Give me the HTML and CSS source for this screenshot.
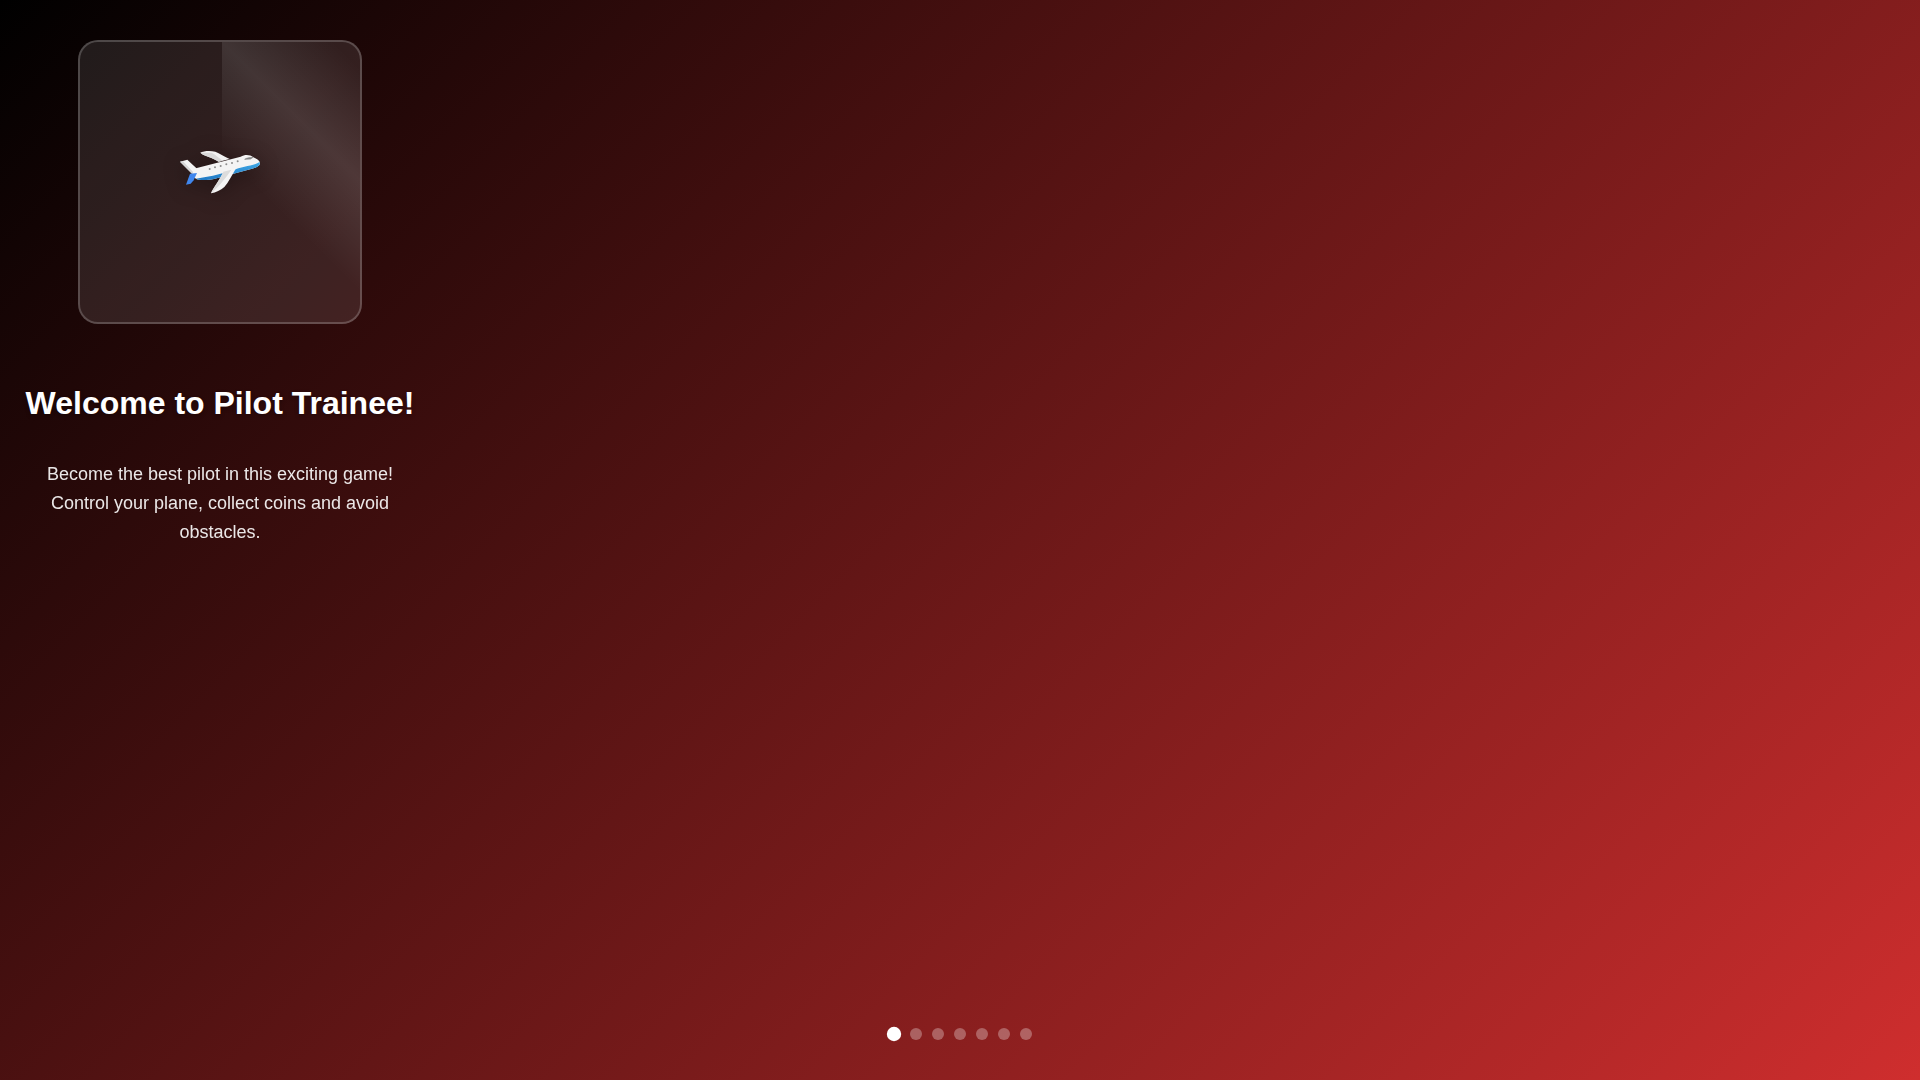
FILE: index.html
```
<!DOCTYPE html>
<html lang="en">
<head>
    <meta charset="UTF-8">
    <meta name="viewport" content="width=device-width, initial-scale=1.0">
    <title>Pilot Trainee</title>
    <link rel="stylesheet" href="styles.css">
</head>
<body>
    <main class="slide">
        <div class="slide-image">
            <svg class="slide-icon" viewBox="60 36 240 240" role="img" aria-label="Plane">
                <defs>
                    <linearGradient id="belly" x1="0" y1="0" x2="0" y2="1">
                        <stop offset="0" stop-color="#3fa9e6"/>
                        <stop offset="1" stop-color="#2179c4"/>
                    </linearGradient>
                </defs>
                <!-- far wing -->
                <path d="M121 68 C130 63 150 62 166 65 C178 70 195 80 209 87 L176 95 C162 86 148 81 129 74 Z" fill="#f2f2f2"/>
                <path d="M121 68 L155 68 C167 75 178 84 188 92 L176 95 C162 86 148 81 129 74 Z" fill="#d9d9d9"/>
                <!-- tail -->
                <path d="M60 95 L82 89 L111 116 L104 145 L96 131 Z" fill="#f4f4f4"/>
                <path d="M60 95 L69 94 L104 131 L104 145 L96 131 Z" fill="#d6d6d6"/>
                <!-- fuselage -->
                <path d="M102 116 L242 80 C256 72 270 74 280 82 C292 87 301 94 300 101 C299 107 290 112 276 116 L162 147 C142 151 118 152 108 146 C98 141 96 127 102 116 Z" fill="#f4f4f4"/>
                <path d="M299 96 C302 106 292 112 276 116 L162 147 C142 151 118 152 108 146 C150 141 205 127 235 115 C260 108 285 105 299 96 Z" fill="url(#belly)"/>
                <path d="M90 131 L111 129 L101 151 L92 161 L78 164 Z" fill="#3f86ed"/>
                <!-- near wing -->
                <path d="M190 125 L228 115 C216 136 205 158 193 171 C182 181 168 187 153 190 C155 181 178 152 190 125 Z" fill="#f5f5f5"/>
                <path d="M190 125 L214 119 C200 141 178 168 153 190 C155 181 178 152 190 125 Z" fill="#dcdcdc"/>
                <!-- windows -->
                <g fill="#8d8d8d">
                    <circle cx="149" cy="117" r="3"/>
                    <circle cx="165" cy="112" r="3"/>
                    <circle cx="182" cy="108" r="3"/>
                    <circle cx="199" cy="103" r="3"/>
                    <circle cx="216" cy="99" r="3"/>
                    <circle cx="233" cy="94" r="3"/>
                </g>
                <path d="M254 88 C261 83 269 83 279 82 L272 87 Z" fill="#858585" stroke="#858585" stroke-width="2"/>
            </svg>
        </div>
        <h1 class="slide-title">Welcome to Pilot Trainee!</h1>
        <p class="slide-text">Become the best pilot in this exciting game! Control your plane, collect coins and avoid obstacles.</p>
    </main>

    <nav class="dots" aria-label="Slides">
        <button class="dot active" type="button" aria-label="Slide 1"></button>
        <button class="dot" type="button" aria-label="Slide 2"></button>
        <button class="dot" type="button" aria-label="Slide 3"></button>
        <button class="dot" type="button" aria-label="Slide 4"></button>
        <button class="dot" type="button" aria-label="Slide 5"></button>
        <button class="dot" type="button" aria-label="Slide 6"></button>
        <button class="dot" type="button" aria-label="Slide 7"></button>
    </nav>
</body>
</html>
```
FILE: styles.css
```
* {
    margin: 0;
    padding: 0;
    box-sizing: border-box;
}

body {
    min-height: 100vh;
    display: flex;
    flex-direction: column;
    justify-content: space-between;
    background: linear-gradient(135deg, #000000 0%, #cf2e2e 100%);
    font-family: "Liberation Sans", Arial, sans-serif;
    color: #ffffff;
}

/* Slide */
.slide {
    width: 100%;
    max-width: 440px;
    padding: 40px 20px;
    display: flex;
    flex-direction: column;
    align-items: center;
    text-align: center;
}

.slide-image {
    position: relative;
    width: 284px;
    height: 284px;
    margin-bottom: 60px;
    display: flex;
    justify-content: center;
    align-items: center;
    border: 2px solid rgba(255, 255, 255, 0.2);
    border-radius: 20px;
    background: rgba(255, 255, 255, 0.1);
    overflow: hidden;
}

/* Light stripe over the right half */
.slide-image::before {
    content: "";
    position: absolute;
    top: 0;
    left: calc(50% + 2px);
    width: 100%;
    height: 100%;
    background: linear-gradient(45deg, transparent 30%, rgba(255, 255, 255, 0.1) 50%, transparent 70%);
}

.slide-icon {
    width: 80px;
    height: 80px;
    filter: drop-shadow(0 4px 10px rgba(0, 0, 0, 0.3));
}

.slide-title {
    margin-bottom: 38px;
    font-size: 32px;
    line-height: 38px;
    text-shadow: 0 2px 4px rgba(0, 0, 0, 0.3);
}

.slide-text {
    max-width: 350px;
    font-size: 18px;
    line-height: 29px;
    opacity: 0.9;
}

/* Pagination */
.dots {
    padding-bottom: 40px;
    display: flex;
    justify-content: center;
    align-items: center;
    gap: 10px;
}

.dot {
    width: 12px;
    height: 12px;
    border: none;
    border-radius: 50%;
    background: rgba(255, 255, 255, 0.3);
    cursor: pointer;
}

.dot.active {
    background: #ffffff;
    transform: scale(1.2);
}
```
